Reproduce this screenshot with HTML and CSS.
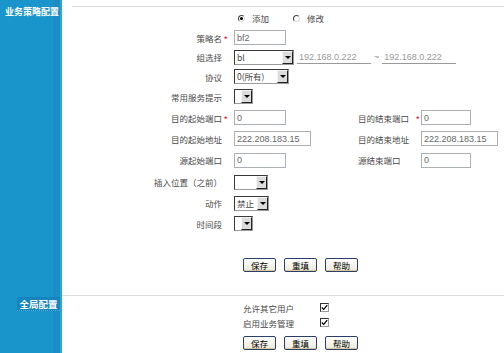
FILE: index.html
```html
<!DOCTYPE html>
<html lang="zh-CN">
  <head>
    <meta charset="UTF-8" />
    <title>业务策略配置</title>
    <link rel="stylesheet" href="styles.css">
  </head>
  <body>
    <div class="page">
      <!-- 业务策略 -->
      <div class="side">
        <h2 class="side-title">业务策略配置</h2>
      </div>
      <div class="main main-policy">
        <div class="rule"></div>
        <div class="form-grid">
          <div class="fld radio-row">
            <label class="radio"><span class="radio-dot checked"></span>添加</label>
            <label class="radio"><span class="radio-dot"></span>修改</label>
          </div>

          <label class="lbl">策略名</label><span class="req">*</span>
          <div class="fld"><input type="text" class="txt w52" value="bf2" /></div>

          <label class="lbl">组选择</label>
          <div class="fld">
            <span class="sel w60"><span class="sel-text">bl</span><span class="sel-btn"></span></span>
            <input type="text" class="ip" value="192.168.0.222" readonly />
            <span class="tilde">~</span>
            <input type="text" class="ip" value="192.168.0.222" readonly />
          </div>

          <label class="lbl">协议</label>
          <div class="fld"><span class="sel w55"><span class="sel-text">0(所有)</span><span class="sel-btn"></span></span></div>

          <label class="lbl">常用服务提示</label>
          <div class="fld"><span class="sel w19"><span class="sel-text"></span><span class="sel-btn"></span></span></div>

          <label class="lbl">目的起始端口</label><span class="req">*</span>
          <div class="fld-half"><input type="text" class="txt w52" value="0" /></div>
          <label class="lbl-r">目的结束端口</label><span class="req-r">*</span>
          <div class="fld-r"><input type="text" class="txt w50" value="0" /></div>

          <label class="lbl">目的起始地址</label>
          <div class="fld-half"><input type="text" class="txt w77" value="222.208.183.15" /></div>
          <label class="lbl-r">目的结束地址</label>
          <div class="fld-r"><input type="text" class="txt w77" value="222.208.183.15" /></div>

          <label class="lbl">源起始端口</label>
          <div class="fld-half"><input type="text" class="txt w52" value="0" /></div>
          <label class="lbl-r">源结束端口</label>
          <div class="fld-r"><input type="text" class="txt w50" value="0" /></div>

          <label class="lbl">插入位置（之前）</label>
          <div class="fld"><span class="sel w34"><span class="sel-text"></span><span class="sel-btn"></span></span></div>

          <label class="lbl">动作</label>
          <div class="fld"><span class="sel w35"><span class="sel-text">禁止</span><span class="sel-btn"></span></span></div>

          <label class="lbl">时间段</label>
          <div class="fld"><span class="sel w19"><span class="sel-text"></span><span class="sel-btn"></span></span></div>
        </div>

        <div class="btn-row btn-row-policy">
          <button class="btn">保存</button>
          <button class="btn">重填</button>
          <button class="btn">帮助</button>
        </div>
      </div>

      <!-- 全局 -->
      <div class="side">
        <h2 class="side-box">全局配置</h2>
      </div>
      <div class="main main-global">
        <div class="opt-grid">
          <span class="opt-label">允许其它用户</span>
          <span class="chk"><svg viewBox="0 0 9 9" width="7" height="7"><polyline points="1,4.5 3.5,7 8,1.5" fill="none" stroke="#000" stroke-width="1.6"/></svg></span>
          <span class="opt-label">启用业务管理</span>
          <span class="chk"><svg viewBox="0 0 9 9" width="7" height="7"><polyline points="1,4.5 3.5,7 8,1.5" fill="none" stroke="#000" stroke-width="1.6"/></svg></span>
        </div>
        <div class="btn-row btn-row-global">
          <button class="btn">保存</button>
          <button class="btn">重填</button>
          <button class="btn">帮助</button>
        </div>
      </div>
    </div>
  </body>
</html>
```

FILE: styles.css
```css
* {
  margin: 0;
  padding: 0;
  box-sizing: border-box;
}
html,
body {
  height: 100%;
}
body {
  font-family: "Noto Sans CJK SC", "Liberation Sans", sans-serif;
  font-size: 8.5px;
  color: #4a4a4a;
  background: #fff;
  overflow: hidden;
}

.page {
  display: grid;
  grid-template-columns: 62px 1fr;
  grid-template-rows: auto 1fr;
  min-height: 100%;
}

/* left blue column */
.side {
  background: #1a95cb;
  border-right: 2px solid #2aa5dd;
  box-shadow: inset -7px 0 0 #1a8ec4;
}
.side-title {
  padding: 5px 0 0 5px;
  line-height: 13px;
  font-size: 9px;
  font-weight: bold;
  color: #fff;
  white-space: nowrap;
}
.side-box {
  margin: 2px 0 0 17px;
  height: 14px;
  line-height: 14px;
  background: #1685bd;
  border-bottom: 1px dotted #4fb0de;
  text-align: center;
  font-size: 9.5px;
  font-weight: bold;
  color: #fff;
}

.main-policy {
  padding-top: 6px;
  padding-bottom: 23px;
}
.rule {
  margin-left: 10px;
  border-top: 1px solid #dedede;
}

.form-grid {
  display: grid;
  grid-template-columns: 160px 12px 124px 58px 5px 1fr;
  grid-template-rows: 20px 19px 20px 19px 21px 21px 21px 22px 22px 20px 21px;
  align-items: center;
  margin-top: 1px;
}
.lbl {
  grid-column: 1;
  text-align: right;
  white-space: nowrap;
}
.req {
  grid-column: 2;
  padding: 3px 0 0 2px;
  color: #e0002a;
  font-family: "Liberation Sans", sans-serif;
  font-size: 9px;
}
.fld {
  grid-column: 3 / -1;
  display: flex;
  align-items: center;
}
.fld-half {
  grid-column: 3;
}
.lbl-r {
  grid-column: 4;
  white-space: nowrap;
}
.req-r {
  grid-column: 5;
  padding-top: 3px;
  color: #e0002a;
  font-family: "Liberation Sans", sans-serif;
  font-size: 9px;
}
.fld-r {
  grid-column: 6;
}

/* radios */
.radio-row {
  padding-left: 4px;
}
.radio {
  display: flex;
  align-items: center;
  width: 55px;
  gap: 7px;
}
.radio-dot {
  width: 7px;
  height: 7px;
  border-radius: 50%;
  border: 1px solid;
  border-color: #444 #ddd #ddd #444;
  display: flex;
  align-items: center;
  justify-content: center;
}
.radio-dot.checked::after {
  content: "";
  width: 3px;
  height: 3px;
  border-radius: 50%;
  background: #000;
}

/* text inputs */
input[type="text"] {
  font-family: "Liberation Sans", sans-serif;
  font-size: 9px;
  color: #666;
  outline: none;
}
.txt {
  height: 15px;
  border: 1px solid #aab0b6;
  padding: 0 2px;
  background: #fff;
}
.w50 {
  width: 50px;
}
.w52 {
  width: 52px;
}
.w77 {
  width: 77px;
}
.ip {
  width: 74px;
  height: 14px;
  border: none;
  border-bottom: 1px solid #999;
  padding: 0 2px;
  color: #9a9a9a !important;
  background: transparent;
}
.fld .sel + .ip {
  margin-left: 3px;
}
.tilde {
  margin: 0 3px;
  color: #888;
  font-family: "Liberation Sans", sans-serif;
  font-size: 9px;
}

/* selects */
.sel {
  display: inline-flex;
  height: 15px;
  border: 1px solid;
  border-color: #3a3a3a #9a9a9a #9a9a9a #3a3a3a;
  background: #fff;
}
.sel-text {
  flex: 1;
  padding-left: 2px;
  line-height: 13px;
  white-space: nowrap;
  overflow: hidden;
  color: #444;
}
.sel-btn {
  width: 11px;
  background: #dcdcdc;
  border: 1px solid;
  border-color: #f4f4f4 #222 #222 #f4f4f4;
  display: flex;
  align-items: center;
  justify-content: center;
}
.sel-btn::after {
  content: "";
  border-left: 3px solid transparent;
  border-right: 3px solid transparent;
  border-top: 3px solid #000;
}
.w19 {
  width: 19px;
}
.w34 {
  width: 34px;
}
.w35 {
  width: 35px;
}
.w55 {
  width: 55px;
}
.w60 {
  width: 60px;
}

/* buttons */
.btn-row {
  display: flex;
  gap: 8px;
  margin-left: 181px;
}
.btn-row-policy {
  margin-top: 24px;
}
.btn {
  width: 33px;
  height: 14px;
  border: 1px solid #2b3f6b;
  border-radius: 2px;
  background: linear-gradient(#ffffff, #ece9d8);
  box-shadow: inset 0 -1px 0 #d8c89a;
  font-family: "Noto Sans CJK SC", sans-serif;
  font-size: 8.5px;
  line-height: 12px;
  color: #000;
  cursor: pointer;
}

/* global section */
.main-global {
  border-top: 1px solid #dedede;
  padding-top: 4px;
}
.opt-grid {
  display: grid;
  grid-template-columns: 77px 10px;
  grid-auto-rows: 15px;
  align-items: center;
  margin-left: 181px;
}
.opt-label {
  white-space: nowrap;
}
.chk {
  width: 9px;
  height: 9px;
  border: 1px solid;
  border-color: #333 #999 #999 #333;
  display: flex;
  align-items: center;
  justify-content: center;
  background: #fff;
}
.btn-row-global {
  margin-top: 6px;
}
```
